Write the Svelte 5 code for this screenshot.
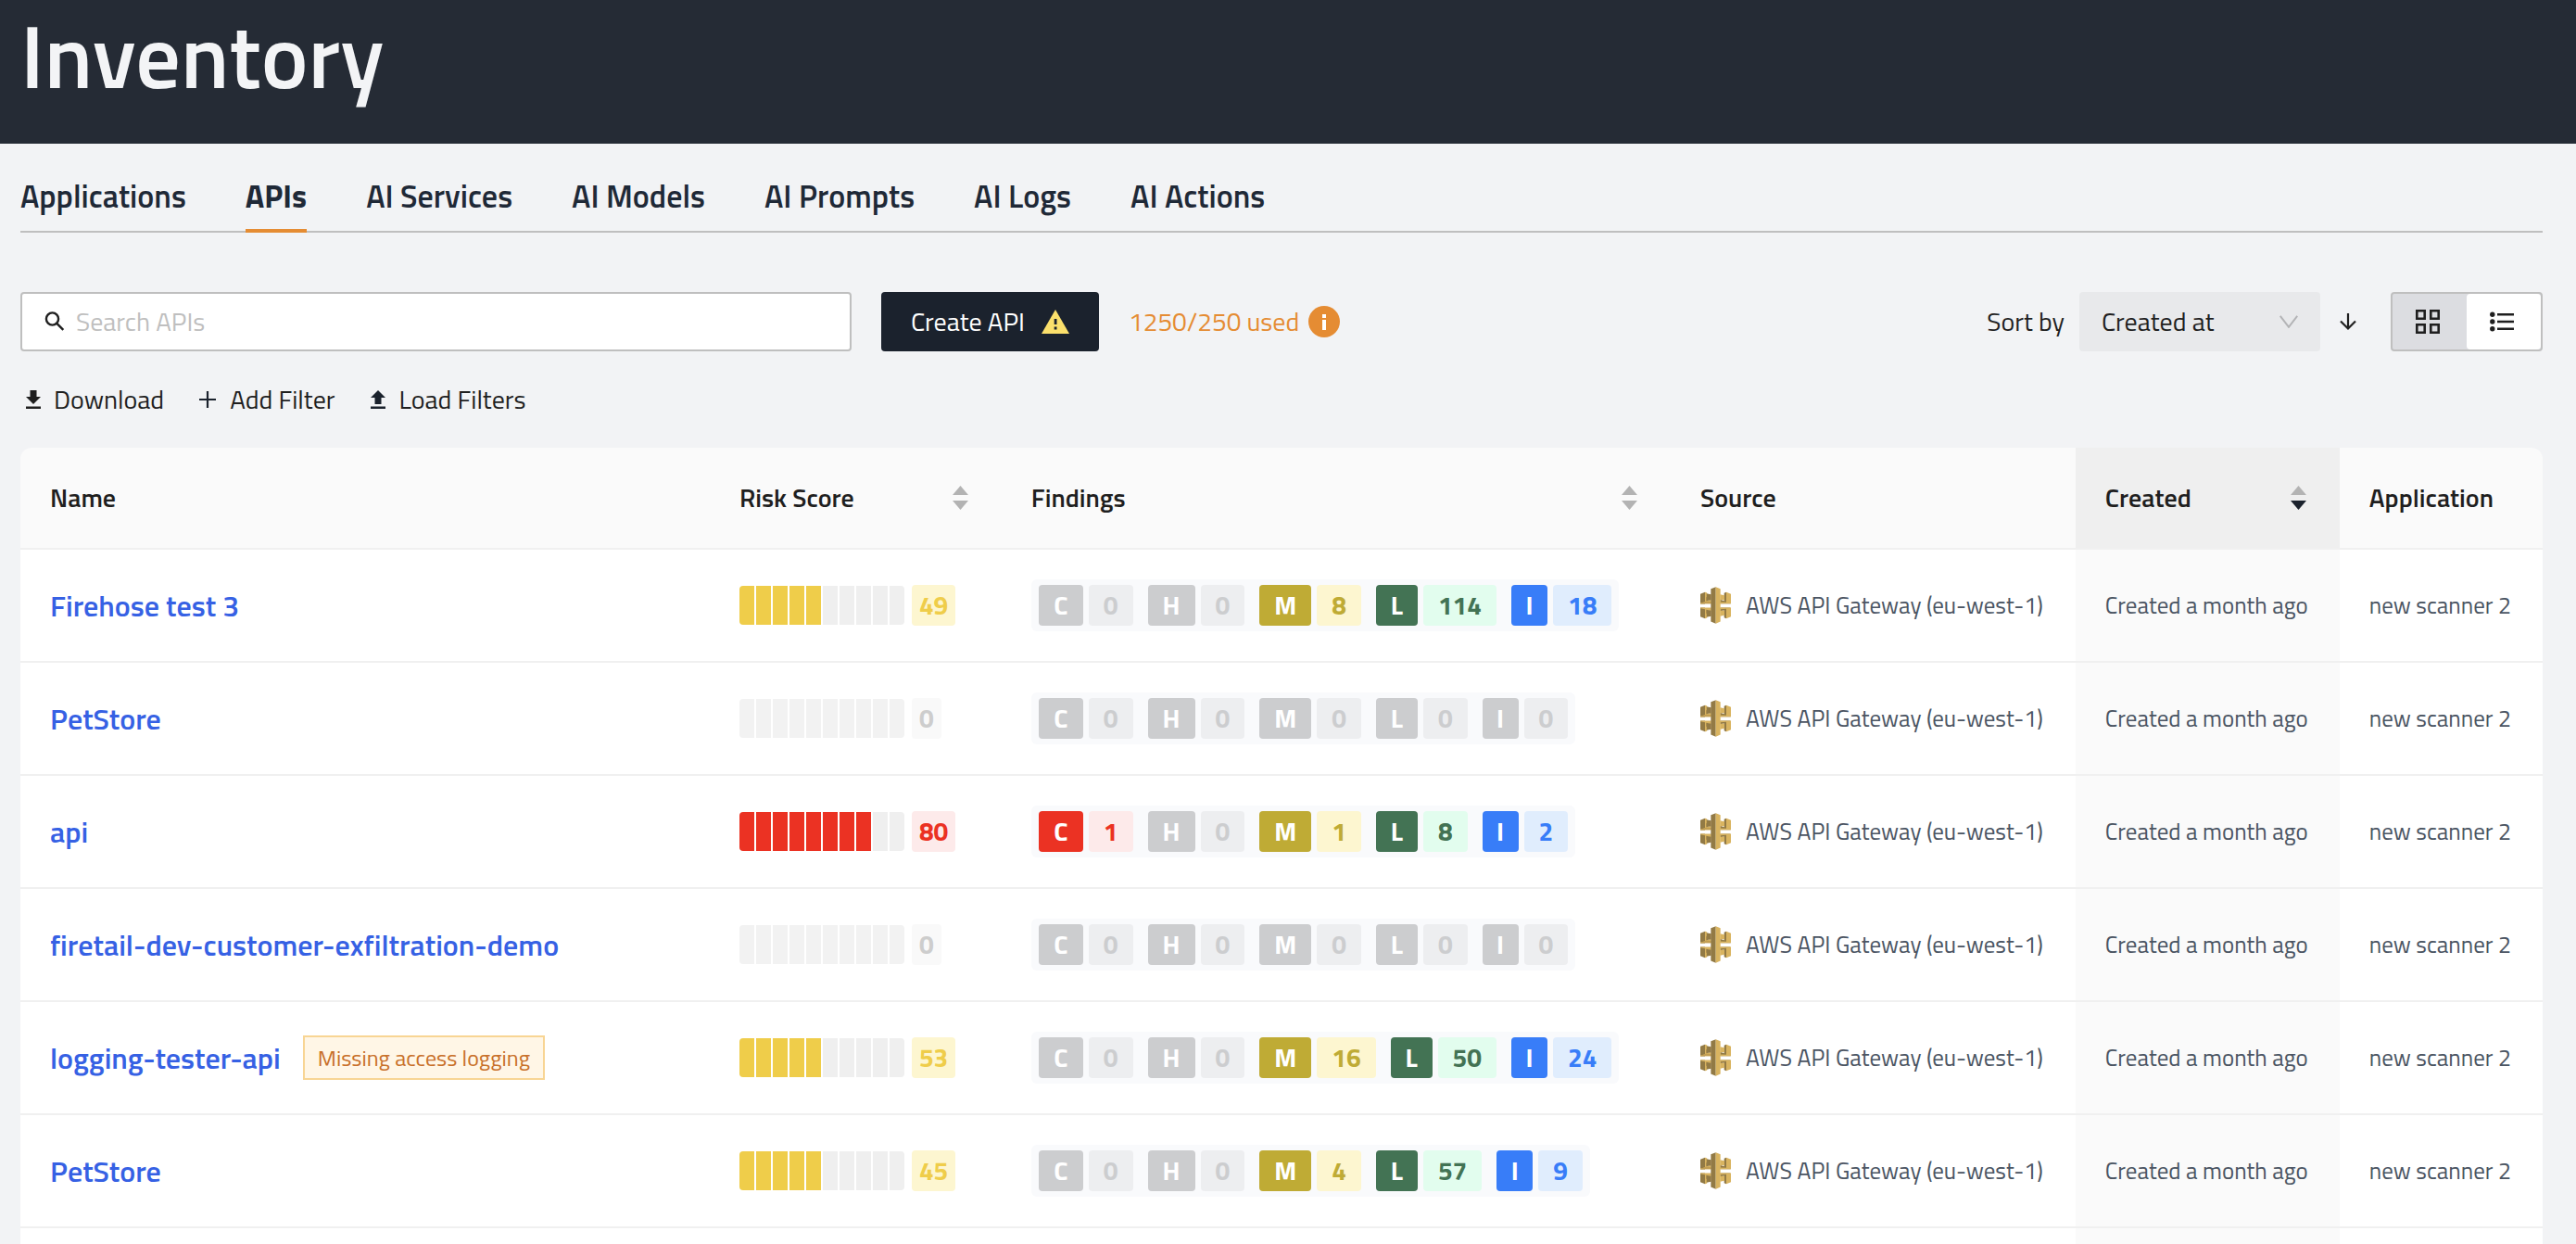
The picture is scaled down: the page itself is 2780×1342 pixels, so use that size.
<script>
  const tabs = ['Applications', 'APIs', 'AI Services', 'AI Models', 'AI Prompts', 'AI Logs', 'AI Actions'];
  let activeTab = $state('APIs');
  let view = $state('grid');
  let query = $state('');
  let sortBy = $state('Created at');

  const levels = ['C', 'H', 'M', 'L', 'I'];
  const segments = Array.from({ length: 10 }, (_, i) => i);

  const rows = [
    { name: 'Firehose test 3', score: 49, findings: [0, 0, 8, 114, 18] },
    { name: 'PetStore', score: 0, findings: [0, 0, 0, 0, 0] },
    { name: 'api', score: 80, findings: [1, 0, 1, 8, 2] },
    { name: 'firetail-dev-customer-exfiltration-demo', score: 0, findings: [0, 0, 0, 0, 0] },
    { name: 'logging-tester-api', tag: 'Missing access logging', score: 53, findings: [0, 0, 16, 50, 24] },
    { name: 'PetStore', score: 45, findings: [0, 0, 4, 57, 9] }
  ];

  const tone = (score) => (score === 0 ? 'none' : score >= 70 ? 'high' : 'medium');
  const filled = (score) => Math.round(score / 10);
</script>

{#snippet sorter(label, active)}
  <button class="sorter" class:active aria-label={'Sort by ' + label}>
    <svg width="17" height="26" viewBox="0 0 17 26" aria-hidden="true">
      <path class="up" d="M8.5 0 17 10H0z" />
      <path class="down" d="M0 16h17L8.5 26z" />
    </svg>
  </button>
{/snippet}

{#snippet gateway()}
  <svg class="gateway" viewBox="0 0 99 119" aria-hidden="true">
    <path fill="#927a45" d="M0 23 15 17V55H0zM0 67H15V102L0 96z" />
    <path fill="#d9b460" d="M15 17 22 20V45L35 41V54H0V52L15 49zM15 102 22 99V76L35 78V67H0V69L15 72z" />
    <path fill="#927a45" d="M19 21 35 24V42L19 45zM19 98 35 95V77L19 74z" />
    <path fill="#d9b460" d="M15 17 20 19V33L15 32zM15 102 20 100V86L15 87z" />
    <path fill="#c39f53" d="M0 53 22 45 35 49V54H0z" />
    <path fill="#927a45" d="M84 17 77 20V45L64 41V54H99L84 49zM84 102 77 99V76L64 78V67H99L84 72z" />
    <path fill="#d9b460" d="M64 24 78 27V42H64zM64 77H78V92L64 95z" />
    <path fill="#d9b460" d="M84 17 99 23V54H64V49L84 50zM84 102 99 96V67H64V72L84 71z" />
    <path fill="#927a45" d="M34 6 50 0V119L34 112z" />
    <path fill="#d9b460" d="M50 0 65 6V112L50 119z" />
  </svg>
{/snippet}

<div class="page">
  <header><h1>Inventory</h1></header>

  <main>
    <nav aria-label="Inventory sections">
      {#each tabs as tab}
        <button class="tab" class:active={activeTab === tab} onclick={() => (activeTab = tab)}>{tab}</button>
      {/each}
    </nav>

    <div class="toolbar">
      <label class="search">
        <svg width="22" height="22" viewBox="0 0 22 22" fill="none" stroke="#1f1f1f" stroke-width="2.4" aria-hidden="true">
          <circle cx="8.5" cy="8" r="6.6" />
          <path d="m13.3 12.8 7 7" />
        </svg>
        <input type="text" placeholder="Search APIs" aria-label="Search APIs" bind:value={query} />
      </label>

      <button class="create">
        Create API
        <svg width="30" height="26" viewBox="0 0 30 26" aria-hidden="true">
          <path fill="#fbe06c" d="M15 0 30 26H0z" />
          <path fill="#1b222d" d="M13.7 10h2.8v6h-2.8zM13.7 18.5h2.8v3h-2.8z" />
        </svg>
      </button>

      <span class="usage">
        1250/250 used
        <svg width="34" height="34" viewBox="0 0 34 34" aria-hidden="true">
          <circle cx="17" cy="17" r="17" fill="#e58c33" />
          <path fill="#fff" d="M15 9h4v4h-4zM15 15h4v11h-4z" />
        </svg>
      </span>

      <div class="sorting">
        <label for="sort">Sort by</label>
        <div class="select">
          <select id="sort" bind:value={sortBy}>
            <option>Created at</option>
          </select>
          <svg width="20" height="14" viewBox="0 0 20 14" fill="none" stroke="#b3b4b6" stroke-width="2" aria-hidden="true">
            <path d="m.8.8 9.2 12 9.2-12" />
          </svg>
        </div>
        <button class="direction" aria-label="Sort descending">
          <svg width="18" height="20" viewBox="0 0 18 20" fill="none" stroke="#1f1f1f" stroke-width="2.2" aria-hidden="true">
            <path d="M9 1v17M1 9.5l8 8 8-8" />
          </svg>
        </button>
      </div>

      <div class="views">
        <button class:active={view === 'grid'} aria-label="Grid view" onclick={() => (view = 'grid')}>
          <svg width="26" height="26" viewBox="0 0 26 26" fill="none" stroke="#1f1f1f" stroke-width="2.6" aria-hidden="true">
            <path d="M1.3 1.3h8.4v8.4H1.3zM16.3 1.3h8.4v8.4h-8.4zM1.3 16.3h8.4v8.4H1.3zM16.3 16.3h8.4v8.4h-8.4z" />
          </svg>
        </button>
        <button class:active={view === 'list'} aria-label="List view" onclick={() => (view = 'list')}>
          <svg width="26" height="22" viewBox="0 0 26 22" fill="#1f1f1f" aria-hidden="true">
            <circle cx="2.8" cy="3.3" r="2.7" /><circle cx="2.8" cy="11" r="2.7" /><circle cx="2.8" cy="18.7" r="2.7" />
            <path d="M8 2h18v2.6H8zM8 9.7h18v2.6H8zM8 17.4h18V20H8z" />
          </svg>
        </button>
      </div>
    </div>

    <div class="actions">
      <button>
        <svg width="18" height="20" viewBox="0 0 18 20" fill="#1f1f1f" aria-hidden="true">
          <path d="M6.5 0h7v7H18l-8 8-8-8h4.500zM2 17.500h16V20H2z" />
        </svg>
        Download
      </button>
      <button>
        <svg width="20" height="20" viewBox="0 0 20 20" fill="none" stroke="#1b222d" stroke-width="2.2" aria-hidden="true">
          <path d="M10 1v18M1 10h18" />
        </svg>
        Add Filter
      </button>
      <button>
        <svg width="18" height="20" viewBox="0 0 18 20" fill="#1b222d" aria-hidden="true">
          <path d="M6.500 15h7V8H18L10 0 2 8h4.500zM2 17.500h16V20H2z" />
        </svg>
        Load Filters
      </button>
    </div>

    <table>
      <colgroup>
        <col class="w-name" /><col class="w-risk" /><col class="w-findings" />
        <col class="w-source" /><col class="w-created" /><col class="w-app" />
      </colgroup>
      <thead>
        <tr>
          <th>Name</th>
          <th><div class="head">Risk Score {@render sorter('Risk Score', false)}</div></th>
          <th><div class="head">Findings {@render sorter('Findings', false)}</div></th>
          <th>Source</th>
          <th class="sorted"><div class="head">Created {@render sorter('Created', true)}</div></th>
          <th>Application</th>
        </tr>
      </thead>
      <tbody>
        {#each rows as row}
          <tr>
            <td>
              <div class="name">
                <a href="#api">{row.name}</a>
                {#if row.tag}<span class="tag">{row.tag}</span>{/if}
              </div>
            </td>
            <td>
              <div class="risk {tone(row.score)}">
                <div class="bars">
                  {#each segments as i}<i class:on={i < filled(row.score)}></i>{/each}
                </div>
                <span class="score">{row.score}</span>
              </div>
            </td>
            <td>
              <div class="findings">
                {#each levels as level, i}
                  <span class="pair {level.toLowerCase()}" class:zero={row.findings[i] === 0}>
                    <b>{level}</b><em>{row.findings[i]}</em>
                  </span>
                {/each}
              </div>
            </td>
            <td><div class="source">{@render gateway()}AWS API Gateway (eu-west-1)</div></td>
            <td class="sorted">Created a month ago</td>
            <td>new scanner 2</td>
          </tr>
        {/each}
        <tr><td></td><td></td><td></td><td></td><td class="sorted"></td><td></td></tr>
      </tbody>
    </table>
  </main>
</div>

<style>
  :global(body) {
    margin: 0;
  }
  .page {
    box-sizing: border-box;
    height: 100vh;
    overflow-y: auto;
    scrollbar-width: none;
    background: #f2f3f5;
    color: #1f1f1f;
    font: 400 28px/40px 'Titillium Web', Roboto, 'Liberation Sans', sans-serif;
  }
  .page *,
  .page *::before {
    box-sizing: border-box;
  }
  button,
  input,
  select {
    font: inherit;
    color: inherit;
    border: 0;
    margin: 0;
    padding: 0;
    background: none;
    cursor: pointer;
  }
  svg {
    display: block;
    flex: none;
  }
  header {
    background: #252b35;
    padding: 3px 22px 40px;
  }
  h1 {
    margin: 0;
    color: #f3f4f6;
    font-size: 96px;
    line-height: 112px;
    font-weight: 600;
  }
  main {
    padding: 26px 36px 0 22px;
  }
  nav {
    display: flex;
    gap: 64px;
    border-bottom: 2px solid #bfbfbf;
  }
  .tab {
    height: 70px;
    margin-bottom: -2px;
    padding-bottom: 6px;
    border-bottom: 4px solid transparent;
    color: #1f2937;
    font-size: 34px;
    font-weight: 600;
  }
  .tab.active {
    border-color: #e58c33;
    font-weight: 700;
  }
  .toolbar {
    display: flex;
    align-items: center;
    gap: 32px;
    margin-top: 64px;
  }
  .search {
    display: flex;
    align-items: center;
    gap: 12px;
    flex: 0 1 897px;
    height: 64px;
    padding: 0 24px;
    background: #fff;
    border: 2px solid #bfbfbf;
    border-radius: 4px;
  }
  .search input {
    flex: 1;
    min-width: 0;
    outline: 0;
    cursor: text;
  }
  .search input::placeholder {
    color: #bfbfbf;
    opacity: 1;
  }
  .create {
    display: flex;
    align-items: center;
    gap: 18px;
    height: 64px;
    padding: 0 32px;
    border-radius: 4px;
    background: #1b222d;
    color: #fff;
    white-space: nowrap;
  }
  .usage {
    display: flex;
    align-items: center;
    gap: 10px;
    color: #e58c33;
    white-space: nowrap;
  }
  .sorting {
    display: flex;
    align-items: center;
    gap: 16px;
    margin-left: auto;
    white-space: nowrap;
  }
  .select {
    position: relative;
    width: 260px;
  }
  .select select {
    width: 100%;
    height: 64px;
    padding: 0 24px;
    appearance: none;
    border-radius: 4px;
    background: #e8e9eb;
  }
  .select svg {
    position: absolute;
    right: 24px;
    top: 25px;
    pointer-events: none;
  }
  .direction {
    padding: 12px 5px;
  }
  .views {
    display: flex;
    height: 64px;
    border: 2px solid #bfbfbf;
    border-radius: 4px;
    background: #dcdde1;
  }
  .views button {
    display: grid;
    place-items: center;
    width: 80px;
    padding-right: 4px;
    border-radius: 4px;
    background: #fff;
  }
  .views button.active {
    background: #dcdde1;
  }
  .actions {
    display: flex;
    gap: 37px;
    margin: 32px 0;
    padding-left: 4px;
  }
  .actions button {
    display: flex;
    align-items: center;
    gap: 14px;
  }
  table {
    width: 100%;
    table-layout: fixed;
    border-collapse: separate;
    border-spacing: 0;
  }
  .w-name {
    width: 27.33%;
  }
  .w-risk {
    width: 11.57%;
  }
  .w-findings {
    width: 26.53%;
  }
  .w-source {
    width: 16.05%;
  }
  .w-created {
    width: 10.47%;
  }
  .w-app {
    width: 8.05%;
  }
  th {
    height: 110px;
    padding: 0 32px;
    background: #fafafa;
    border-bottom: 2px solid #f0f0f0;
    font-weight: 600;
    text-align: left;
    white-space: nowrap;
  }
  th:first-child {
    border-top-left-radius: 12px;
  }
  th:last-child {
    border-top-right-radius: 12px;
  }
  th.sorted {
    background: #efefef;
  }
  .head {
    display: flex;
    align-items: center;
    justify-content: space-between;
    padding-right: 4px;
  }
  .sorter {
    fill: #b3b3b3;
  }
  .sorter.active .down {
    fill: #1b222d;
  }
  td {
    height: 122px;
    padding: 0 32px;
    background: #fff;
    border-bottom: 2px solid #f0f0f0;
    color: #4b5563;
    font-size: 25px;
    white-space: nowrap;
  }
  td.sorted {
    background: #fafafa;
  }
  .name {
    display: flex;
    align-items: center;
    gap: 24px;
  }
  .name a {
    color: #3661e4;
    font-size: 32px;
    font-weight: 600;
    text-decoration: none;
  }
  .tag {
    height: 48px;
    padding: 0 14px;
    border: 2px solid #f8d594;
    background: #fff6e6;
    color: #c8702a;
    font-size: 24px;
    line-height: 44px;
  }
  .risk {
    display: flex;
    align-items: center;
    gap: 8px;
  }
  .bars {
    display: flex;
    gap: 2px;
  }
  .bars i {
    width: 16px;
    height: 42px;
    background: #efefef;
  }
  .bars i:first-child {
    border-radius: 4px 0 0 4px;
  }
  .bars i:last-child {
    border-radius: 0 4px 4px 0;
  }
  .score,
  .pair b,
  .pair em {
    height: 44px;
    border-radius: 4px;
    font-size: 28px;
    font-style: normal;
    font-weight: 700;
    line-height: 44px;
    text-align: center;
  }
  .score {
    padding: 0 8px;
  }
  .medium .on {
    background: #efcd4a;
  }
  .medium .score {
    background: #fdf6d0;
    color: #efcd4a;
  }
  .high .on {
    background: #eb3223;
  }
  .high .score {
    background: #fdeaea;
    color: #eb3223;
  }
  .none i {
    background: #f2f2f2;
  }
  .none .score {
    background: #f9f9f9;
    color: #cdcdcd;
  }
  .findings {
    display: inline-flex;
    gap: 16px;
    padding: 6px 8px;
    border-radius: 6px;
    background: #f9fafc;
    vertical-align: middle;
  }
  .pair {
    display: flex;
    gap: 6px;
  }
  .pair b {
    color: #fff;
  }
  .pair em {
    padding: 0 16px;
  }
  .c b {
    width: 48px;
    background: #eb3223;
  }
  .c em {
    background: #fdeaea;
    color: #eb3223;
  }
  .h b {
    width: 51px;
  }
  .m b {
    width: 56px;
    background: #bfab35;
  }
  .m em {
    background: #fdf6d0;
    color: #bfab35;
  }
  .l b {
    width: 45px;
    background: #437354;
  }
  .l em {
    background: #e2fdee;
    color: #437354;
  }
  .i b {
    width: 39px;
    background: #387df8;
  }
  .i em {
    background: #e0edfd;
    color: #387df8;
  }
  .zero b {
    background: #cccdcf;
  }
  .zero em {
    background: #edeef0;
    color: #cccdcf;
  }
  .source {
    display: flex;
    align-items: center;
    gap: 16px;
  }
  .gateway {
    width: 33px;
    height: 40px;
  }
</style>
